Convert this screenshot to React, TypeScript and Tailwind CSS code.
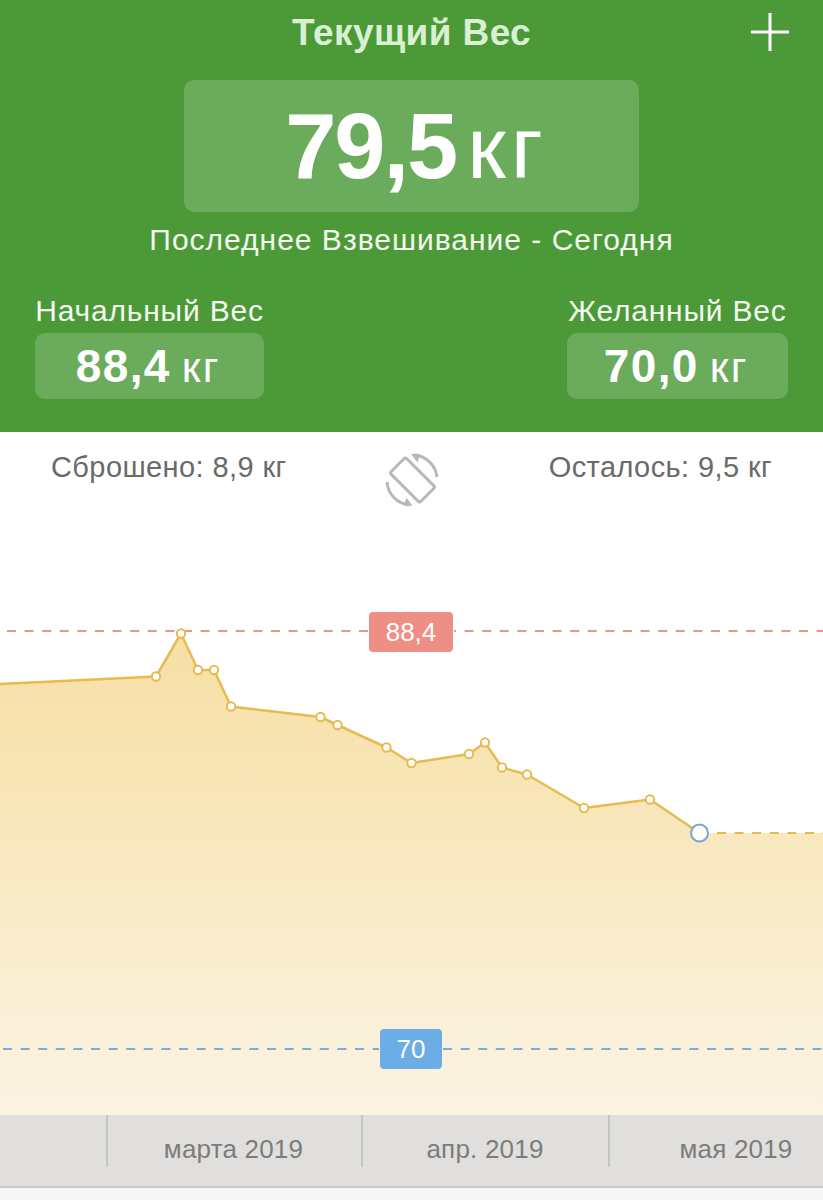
const pts: [number, number][] = [
  [156, 676.5], [181, 633.5], [198, 670], [214, 670], [231, 706.5], [320.5, 717], [337.5, 725], [386.5, 747.5],
  [411.5, 763], [469, 754], [485, 742.5], [502, 767.5], [527, 774.5], [584, 808], [650, 799.5],
];
const T = 432;
const line = [[0, 684], ...pts, [699.5, 833]].map(([x, y]) => `${x},${y - T}`).join(" ");

function Unit({ value, unit, big }: { value: string; unit: string; big?: boolean }) {
  return big ? (
    <div className="flex items-baseline justify-center pl-[10px] text-white">
      <span className="text-[92px] leading-none font-bold tracking-[-2px]">{value}</span>
      <span className="ml-[11px] text-[88px] leading-none tracking-[5px]">{unit}</span>
    </div>
  ) : (
    <div className="flex items-baseline justify-center pr-[3px] text-white">
      <span className="text-[46px] leading-none font-bold tracking-[1.4px]">{value}</span>
      <span className="ml-[11px] text-[43px] leading-none tracking-[2px]">{unit}</span>
    </div>
  );
}

export default function App() {
  return (
    <div className="flex h-[1200px] w-[823px] flex-col overflow-hidden bg-white font-['Liberation_Sans',Arial,sans-serif]">
      <header className="flex h-[432px] flex-col bg-[#4c9938] px-[35px]">
        <div className="relative flex h-[66px] items-center justify-center">
          <h1 className="text-[37px] font-bold tracking-[0.4px] text-[#d9f0d3]">Текущий Вес</h1>
          <svg className="absolute top-[13px] right-[-1px] h-[38px] w-[38px]" viewBox="0 0 38 38" stroke="#fff" strokeWidth="3">
            <path d="M0 19H38M19 0V38" />
          </svg>
        </div>
        <div className="mt-[14px] flex h-[132px] w-[455px] items-center justify-center self-center rounded-[10px] bg-[#6bab5c]">
          <Unit big value="79,5" unit="кг" />
        </div>
        <p className="mt-[11px] text-center text-[30px] leading-[34px] tracking-[1px] text-[#f3f9f1]">Последнее Взвешивание - Сегодня</p>
        <div className="mt-[37px] flex justify-between">
          <div className="w-[229px]">
            <p className="text-center text-[30px] leading-[34px] tracking-[0.8px] whitespace-nowrap text-[#f3f9f1]">Начальный Вес</p>
            <div className="mt-[5px] flex h-[66px] items-center justify-center rounded-[10px] bg-[#6bab5c]">
              <Unit value="88,4" unit="кг" />
            </div>
          </div>
          <div className="w-[221px]">
            <p className="text-center text-[30px] leading-[34px] tracking-[0.8px] whitespace-nowrap text-[#f3f9f1]">Желанный Вес</p>
            <div className="mt-[5px] flex h-[66px] items-center justify-center rounded-[10px] bg-[#6bab5c]">
              <Unit value="70,0" unit="кг" />
            </div>
          </div>
        </div>
      </header>

      <main className="relative h-[683px] bg-white">
        <div className="flex items-start justify-between px-[51px] pt-[17px] text-[29px] leading-[36px] tracking-[0.4px] text-[#6a6a6a]">
          <span>Сброшено: 8,9 кг</span>
          <span>Осталось: 9,5 кг</span>
        </div>
        <svg className="absolute top-[18px] left-[382px] h-[60px] w-[60px]" viewBox="0 0 60 60" fill="none" stroke="#b8b8b8">
          <rect x="19.5" y="9" width="22" height="42" rx="2" strokeWidth="3" transform="rotate(-45 30.5 30)" />
          <path d="M33 5A25 25 0 0 1 55 27" strokeWidth="3" />
          <path d="M27 55A25 25 0 0 1 5 32" strokeWidth="3" />
          <path d="M29 4L38 4L35.5 12.5zM30.7 56L21.3 55L24.7 48z" fill="#b8b8b8" stroke="none" />
        </svg>
        <svg className="absolute inset-0 h-[683px] w-[823px]" viewBox="0 0 823 683" fill="none">
          <defs>
            <linearGradient id="area" x1="0" y1="200" x2="0" y2="683" gradientUnits="userSpaceOnUse">
              <stop offset="0" stopColor="#f7dfa3" />
              <stop offset="1" stopColor="#fbf4e3" />
            </linearGradient>
          </defs>
          <polygon points={`${line} 823,401 823,683 0,683`} fill="url(#area)" />
          <path d="M7 199H823" stroke="#e8958c" strokeWidth="2" strokeDasharray="9 8.6" />
          <path d="M3 617H823" stroke="#7aaddf" strokeWidth="2" strokeDasharray="9 8.6" />
          <polyline points={line} stroke="#e8bb50" strokeWidth="2.5" strokeLinejoin="round" />
          <path d="M717 401H823" stroke="#e8bb50" strokeWidth="2" strokeDasharray="9 8.6" />
          {pts.map(([x, y]) => (
            <circle key={x} cx={x} cy={y - T} r="4.2" fill="#fff" stroke="#e8bb50" strokeWidth="2" />
          ))}
          <circle cx="699.5" cy="401" r="8.5" fill="#fff" stroke="#71a8d6" strokeWidth="2" />
        </svg>
        <div className="absolute top-[179px] left-[368px] flex h-[42px] w-[86px] items-center justify-center rounded-[5px] border border-white bg-[#ee8f85] text-[26px] text-white">88,4</div>
        <div className="absolute top-[596px] left-[379px] flex h-[42px] w-[64px] items-center justify-center rounded-[5px] border border-[#fbf0d8] bg-[#6bade6] text-[26px] text-white">70</div>
      </main>

      <div className="flex h-[73px] border-b-2 border-[#c8c8c8] bg-[#e0dfdd] text-[26px] tracking-[0.2px] text-[#7d7c7a]">
        <div className="h-[52px] w-[108px] border-r-2 border-[#c5c5c3]" />
        <div className="flex h-[52px] w-[255px] items-end justify-center border-r-2 border-[#c5c5c3] pr-[2px] leading-[36px]">
          <span>марта 2019</span>
        </div>
        <div className="flex h-[52px] w-[247px] items-end justify-center border-r-2 border-[#c5c5c3] pr-[1px] leading-[36px]">
          <span>апр. 2019</span>
        </div>
        <div className="flex h-[52px] flex-1 items-end justify-center pl-[39px] leading-[36px]">
          <span className="whitespace-nowrap">мая 2019</span>
        </div>
      </div>
      <div className="flex-1 bg-[#f6f6f6]" />
    </div>
  );
}
